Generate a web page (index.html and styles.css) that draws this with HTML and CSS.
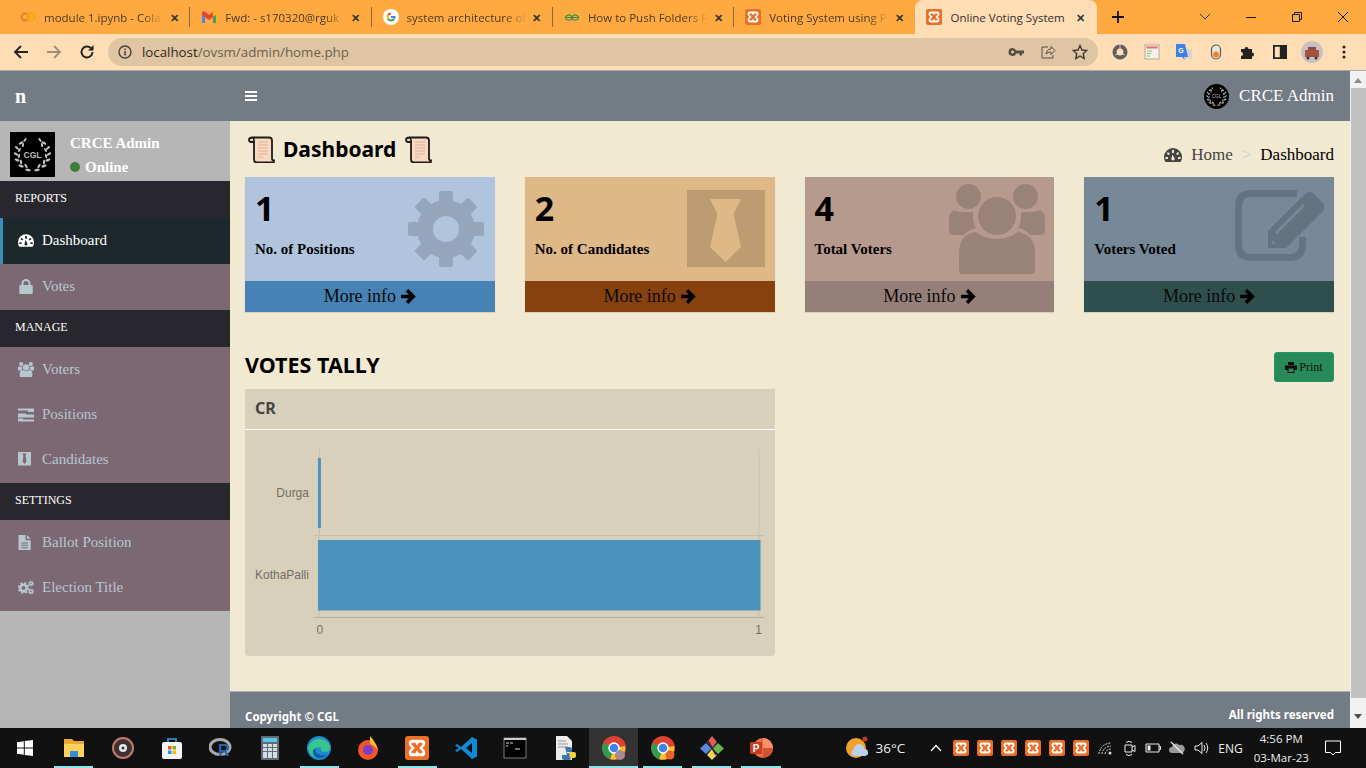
FILE: index.html
```html
<!DOCTYPE html>
<html lang="en">
<head>
	<meta charset="UTF-8">
	<title>Online Voting System</title>
	<link rel="stylesheet" href="styles.css">
</head>
<body>
	<svg class="defs" width="0" height="0">
		<symbol id="xampp" viewBox="0 0 16 16">
			<rect width="16" height="16" rx="2" fill="#ea7027"/>
			<path d="M5 2.500h6q2.500 0 2.500 2.400 0 2-2 3.100 2 1.100 2 3.100 0 2.400-2.500 2.400H5q-2.500 0-2.500-2.400 0-2 2-3.100-2-1.100-2-3.100Q2.500 2.500 5 2.500Z" fill="#fff"/>
			<path d="M5 4.500h1.800L8 6.300 9.200 4.500H11q.8.200.8 1L9.500 8l2.300 2.500q0 .8-.8 1H9.200L8 9.700 6.800 11.500H5q-.8-.2-.8-1L6.500 8 4.200 5.500q0-.8.800-1Z" fill="#ea7027"/>
		</symbol>
		<symbol id="gauge" viewBox="0 0 18 14">
			<path fill-rule="evenodd" d="M9 0a9 9 0 0 1 9 9q0 3-1.500 5h-15Q0 12 0 9a9 9 0 0 1 9-9ZM8 2v3h2V2ZM3.500 4 3 6l2 1 1-1.500ZM14.500 4 12 5.500l1 1.500 2-1ZM8.300 6.500 7.500 10a1.700 1.700 0 1 0 3 0ZM1.500 9v2h2.500V9ZM14 9v2h2.500V9Z"/>
		</symbol>
		<symbol id="lock" viewBox="0 0 16 15">
			<path fill-rule="evenodd" d="M3.500 6V4.500a4.500 4.500 0 0 1 9 0V6h1.500a.7.700 0 0 1 .7.700v7.600a.7.700 0 0 1-.7.700H2a.7.700 0 0 1-.7-.7V6.700A.7.700 0 0 1 2 6ZM5.500 6h5V4.500a2.500 2.500 0 0 0-5 0Z"/>
		</symbol>
		<symbol id="users" viewBox="0 0 96 90">
			<circle cx="19.500" cy="12.500" r="12.500"/>
			<circle cx="76.500" cy="12.500" r="12.500"/>
			<circle cx="48" cy="32" r="19"/>
			<path d="M13 90q-3 0-3-6V70q0-20 17-22 9 7 21 7t21-7q17 2 17 22v14q0 6-3 6Z"/>
			<path d="M5 26q6 3 19 2 0 12 3 16-7 1-12 7H5q-5 0-5-5V36q0-8 5-10Z"/>
			<path d="M91 26q-6 3-19 2 0 12-3 16 7 1 12 7h10q5 0 5-5V36q0-8-5-10Z"/>
		</symbol>
		<symbol id="tasks" viewBox="0 0 16 14">
			<path d="M0 1h16v3.500H10V3H0ZM0 6h8v1h8v3H0ZM0 11h5v1h11v2H0Z"/>
		</symbol>
		<symbol id="tie" viewBox="0 0 16 15">
			<path fill-rule="evenodd" d="M0 0h13v13.500H0ZM4.500 1.500h4L7.500 4l1 5.500-2 2.500-2-2.500 1-5.500Z"/>
		</symbol>
		<symbol id="file" viewBox="0 0 16 16">
			<path fill-rule="evenodd" d="M0 0h7.500v5.500H13V16H0ZM3 8v1h7V8ZM3 10.500v1h7v-1ZM3 13v1h7v-1ZM9 0l4 4H9Z"/>
		</symbol>
		<symbol id="cogs" viewBox="0 0 16 14">
			<g fill="none" stroke="currentColor">
				<circle cx="5.500" cy="7.500" r="3.200" stroke-width="2.600"/>
				<circle cx="5.500" cy="7.500" r="5" stroke-width="1.600" stroke-dasharray="2.200 1.730"/>
				<circle cx="13" cy="3" r="1.500" stroke-width="1.400"/>
				<circle cx="13" cy="3" r="2.600" stroke-width="1" stroke-dasharray="1.100 1.050"/>
				<circle cx="13" cy="11" r="1.500" stroke-width="1.400"/>
				<circle cx="13" cy="11" r="2.600" stroke-width="1" stroke-dasharray="1.100 1.050"/>
			</g>
		</symbol>
		<symbol id="scroll" viewBox="0 0 27 27">
			<path d="M5 1.500h16q3 0 3 3v18q0 2 2 2v1q0 1-1 1H9q-3 0-3-3V6H3Q1 6 1 3.800T5 1.500Z" fill="#f9d8c2" stroke="#1f1a18" stroke-width="1.800"/>
			<path d="M10 6h10M10 9h10M10 12h10M10 15h10M10 18h10M10 21h5" stroke="#dcb49c" fill="none"/>
			<path d="M6 6V4.500q0-3-2-3" fill="none" stroke="#1f1a18" stroke-width="1.600"/>
		</symbol>
		<symbol id="arrow" viewBox="0 0 16 16">
			<path d="M1 8h12.500M7 1.800l6.200 6.200L7 14.200" fill="none" stroke="#000" stroke-width="3.600"/>
		</symbol>
		<symbol id="logo" viewBox="0 0 45 45">
			<rect width="45" height="45" fill="#000"/>
			<g fill="#c4c4c4">
				<ellipse cx="15" cy="8" rx="1" ry="2.300" transform="rotate(35 15 8)"/>
				<ellipse cx="11" cy="11" rx="1.100" ry="2.500" transform="rotate(60 11 11)"/>
				<ellipse cx="13" cy="13" rx="1" ry="2.200" transform="rotate(10 13 13)"/>
				<ellipse cx="7" cy="16" rx="1.100" ry="2.500" transform="rotate(-50 7 16)"/>
				<ellipse cx="9.500" cy="18" rx="1" ry="2.200" transform="rotate(30 9.500 18)"/>
				<ellipse cx="6" cy="22" rx="1.100" ry="2.500" transform="rotate(-60 6 22)"/>
				<ellipse cx="9" cy="24" rx="1" ry="2.200" transform="rotate(15 9 24)"/>
				<ellipse cx="7" cy="28" rx="1.200" ry="2.600" transform="rotate(-70 7 28)"/>
				<ellipse cx="11" cy="30" rx="1.100" ry="2.400" transform="rotate(-10 11 30)"/>
				<ellipse cx="11" cy="34" rx="1.200" ry="2.800" transform="rotate(-70 11 34)"/>
				<ellipse cx="16" cy="34" rx="1.100" ry="2.500" transform="rotate(-30 16 34)"/>
				<ellipse cx="18" cy="38" rx="1.200" ry="2.800" transform="rotate(-80 18 38)"/>
				<ellipse cx="30" cy="8" rx="1" ry="2.300" transform="rotate(-35 30 8)"/>
				<ellipse cx="34" cy="11" rx="1.100" ry="2.500" transform="rotate(-60 34 11)"/>
				<ellipse cx="32" cy="13" rx="1" ry="2.200" transform="rotate(-10 32 13)"/>
				<ellipse cx="38" cy="16" rx="1.100" ry="2.500" transform="rotate(50 38 16)"/>
				<ellipse cx="35.500" cy="18" rx="1" ry="2.200" transform="rotate(-30 35.500 18)"/>
				<ellipse cx="39" cy="22" rx="1.100" ry="2.500" transform="rotate(60 39 22)"/>
				<ellipse cx="36" cy="24" rx="1" ry="2.200" transform="rotate(-15 36 24)"/>
				<ellipse cx="38" cy="28" rx="1.200" ry="2.600" transform="rotate(70 38 28)"/>
				<ellipse cx="34" cy="30" rx="1.100" ry="2.400" transform="rotate(10 34 30)"/>
				<ellipse cx="34" cy="34" rx="1.200" ry="2.800" transform="rotate(70 34 34)"/>
				<ellipse cx="29" cy="34" rx="1.100" ry="2.500" transform="rotate(30 29 34)"/>
				<ellipse cx="27" cy="38" rx="1.200" ry="2.800" transform="rotate(80 27 38)"/>
			</g>
			<text x="22.500" y="25.500" class="logo-text">CGL</text>
		</symbol>
	</svg>

	<div class="tabstrip">
		<div class="tab">
			<svg class="favicon" viewBox="0 0 16 16"><circle cx="5" cy="8" r="3.500" fill="none" stroke="#e8862a" stroke-width="2.500"/><circle cx="11" cy="8" r="3.500" fill="none" stroke="#f4a90f" stroke-width="2.500"/></svg>
			<span class="tab-title">module 1.ipynb - Cola</span><span class="tab-close">✕</span>
		</div>
		<div class="tab">
			<svg class="favicon" viewBox="0 0 16 16"><path d="M1 4v10h3V7Z" fill="#4a86e8"/><path d="M15 4v10h-3V7Z" fill="#34a853"/><path d="M1 3l2-1 5 4 5-4 2 1v3l-7 5-7-5Z" fill="#ea4335"/><path d="M13 2l2 1v3l-3 2V3Z" fill="#fbbc04"/></svg>
			<span class="tab-title">Fwd: - s170320@rguk</span><span class="tab-close">✕</span>
		</div>
		<div class="tab">
			<svg class="favicon" viewBox="0 0 16 16"><circle cx="8" cy="8" r="8" fill="#fff"/><path d="M8 4.500a3.500 3.500 0 0 0-3 1.800" fill="none" stroke="#ea4335" stroke-width="2"/><path d="M5 6.300a3.500 3.500 0 0 0 0 3.400" fill="none" stroke="#fbbc04" stroke-width="2"/><path d="M5 9.700a3.500 3.500 0 0 0 6 0" fill="none" stroke="#34a853" stroke-width="2"/><path d="M11 9.700Q11.500 9 11.500 8H8" fill="none" stroke="#4285f4" stroke-width="2"/></svg>
			<span class="tab-title">system architecture of</span><span class="tab-close">✕</span>
		</div>
		<div class="tab">
			<svg class="favicon" viewBox="0 0 16 16"><path d="M1 8.500h14M8 8.500Q7 5.500 4.500 6T1.500 8.500t3 2.500T8 8.500Q9 5.500 11.500 6t3 2.500-3 2.500T8 8.500" fill="none" stroke="#2f8d46" stroke-width="1.100"/></svg>
			<span class="tab-title">How to Push Folders F</span><span class="tab-close">✕</span>
		</div>
		<div class="tab tab-last">
			<svg class="favicon"><use href="#xampp"/></svg>
			<span class="tab-title">Voting System using P</span><span class="tab-close">✕</span>
		</div>
		<div class="tab tab-active">
			<svg class="favicon"><use href="#xampp"/></svg>
			<span class="tab-title">Online Voting System</span><span class="tab-close">✕</span>
		</div>
		<svg class="new-tab" viewBox="0 0 14 14"><path d="M7 1v12M1 7h12" stroke="#111" stroke-width="1.800"/></svg>
		<div class="window-controls">
			<svg viewBox="0 0 12 12"><path d="M1 3l5 5 5-5" fill="none" stroke="#3a3a3a"/></svg>
			<svg viewBox="0 0 12 12"><path d="M1 6.500h10" stroke="#1a1a1a"/></svg>
			<svg viewBox="0 0 12 12"><path d="M1.500 3.500h7v7h-7ZM3.500 3.500v-2h7v7h-2" fill="none" stroke="#1a1a1a"/></svg>
			<svg viewBox="0 0 12 12"><path d="M1 1l10 10M11 1L1 11" stroke="#1a1a1a"/></svg>
		</div>
	</div>

	<div class="toolbar">
		<svg class="tool-btn" viewBox="0 0 16 16"><path d="M15 8H2M8 2L2 8l6 6" fill="none" stroke="#222" stroke-width="1.800"/></svg>
		<svg class="tool-btn" viewBox="0 0 16 16"><path d="M1 8h13M8 2l6 6-6 6" fill="none" stroke="#a08f7c" stroke-width="1.800"/></svg>
		<svg class="tool-btn" viewBox="0 0 16 16"><path d="M13.500 8a5.500 5.500 0 1 1-1.600-3.900" fill="none" stroke="#222" stroke-width="1.900"/><path d="M14.500 1v5.500H9Z" fill="#222"/></svg>
		<div class="omnibox">
			<svg class="omni-info" viewBox="0 0 14 14"><circle cx="7" cy="7" r="6" fill="none" stroke="#4a4238" stroke-width="1.400"/><path d="M7 6v4.500M7 3.500v1.500" stroke="#4a4238" stroke-width="1.500"/></svg>
			<span class="url"><span class="url-host">localhost</span>/ovsm/admin/home.php</span>
			<svg class="omni-icon" viewBox="0 0 16 16"><path fill-rule="evenodd" d="M4.500 4a4 4 0 0 1 3.700 2.500H16v3h-2v2h-2.500v-2H8.200A4 4 0 1 1 4.500 4Zm0 2.500a1.500 1.500 0 1 0 .1 0Z" fill="#574f45"/></svg>
			<svg class="omni-icon" viewBox="0 0 16 16"><path d="M8 3H2v11h11v-3M6 10q1-5 5-5V2.500l4 4-4 4V8q-3 0-5 2Z" fill="none" stroke="#574f45"/></svg>
			<svg class="omni-icon" viewBox="0 0 16 16"><path d="M8 1.500l2 4.500 4.800.5-3.600 3.200 1 4.800L8 12l-4.200 2.500 1-4.800L1.200 6.500 6 6Z" fill="none" stroke="#3f3a33" stroke-width="1.400"/></svg>
		</div>
		<div class="extensions">
			<svg viewBox="0 0 16 16"><circle cx="8" cy="8" r="5.500" fill="none" stroke="#5e5e5e" stroke-width="4"/><path d="M8 0v5M13 11l-4-2M3 11l4-2" stroke="#ffddb5" stroke-width=".8"/></svg>
			<svg viewBox="0 0 16 16"><rect x="1" y="1" width="14" height="14" fill="#f6f1ea" stroke="#b0aaa0"/><path d="M2.500 2.500h11v2h-11Z" fill="#e86a5c"/><path d="M3 7h5M3 9.500h4M3 12h3" stroke="#7cc36a"/></svg>
			<svg viewBox="0 0 16 16"><path d="M8 5h8v10H9Z" fill="#d9d4cc"/><path d="M0 0h9l3 13H8l1 3-3-3H0Z" fill="#3f7fe8"/><text x="5" y="9" class="ext-g">G</text></svg>
			<svg viewBox="0 0 16 16"><rect x="3.500" y="1" width="9" height="14" rx="4.500" fill="#ece6de" stroke="#5b5b5b" stroke-width="1.200"/><circle cx="8" cy="10.500" r="3" fill="#f08026"/></svg>
			<svg viewBox="0 0 16 16"><path d="M1 5h3.500a2 2 0 1 1 4 0H12v3.500a2 2 0 1 1 0 4V15H1v-3a2 2 0 1 0 0-4Z" fill="#222"/></svg>
			<svg viewBox="0 0 16 16"><path fill-rule="evenodd" d="M1 1h14v14H1ZM2.800 2.800v10.400h5V2.800Z" fill="#222"/></svg>
			<svg class="avatar" viewBox="0 0 22 22"><circle cx="11" cy="11" r="11" fill="#c8c1c4"/><rect x="4" y="9" width="14" height="7" fill="#a8503c"/><path d="M7 6h8v3H7Z" fill="#8b4a3c"/><circle cx="7" cy="17" r="1.500" fill="#333"/><circle cx="15" cy="17" r="1.500" fill="#333"/></svg>
			<svg viewBox="0 0 16 16"><circle cx="8" cy="3" r="1.500" fill="#222"/><circle cx="8" cy="8" r="1.500" fill="#222"/><circle cx="8" cy="13" r="1.500" fill="#222"/></svg>
		</div>
	</div>

	<div class="viewport">
		<div class="page">
			<header class="topbar">
				<div class="brand">n</div>
				<svg class="burger" viewBox="0 0 12 10"><path d="M0 1h12M0 5h12M0 9h12" stroke="#fff" stroke-width="2"/></svg>
				<div class="top-user">
					<svg class="top-avatar"><use href="#logo"/></svg>
					<span>CRCE Admin</span>
				</div>
			</header>
			<div class="main">
				<aside class="sidebar">
					<div class="user-panel">
						<svg class="user-logo"><use href="#logo"/></svg>
						<div class="user-info">
							<div class="user-name">CRCE Admin</div>
							<div class="user-status"><span class="status-dot"></span>Online</div>
						</div>
					</div>
					<div class="menu-head">REPORTS</div>
					<a class="menu-item active"><svg class="menu-icon"><use href="#gauge"/></svg>Dashboard</a>
					<a class="menu-item"><svg class="menu-icon"><use href="#lock"/></svg>Votes</a>
					<div class="menu-head">MANAGE</div>
					<a class="menu-item"><svg class="menu-icon"><use href="#users"/></svg>Voters</a>
					<a class="menu-item"><svg class="menu-icon"><use href="#tasks"/></svg>Positions</a>
					<a class="menu-item"><svg class="menu-icon"><use href="#tie"/></svg>Candidates</a>
					<div class="menu-head">SETTINGS</div>
					<a class="menu-item"><svg class="menu-icon"><use href="#file"/></svg>Ballot Position</a>
					<a class="menu-item"><svg class="menu-icon"><use href="#cogs"/></svg>Election Title</a>
				</aside>
				<div class="content">
					<div class="content-inner">
						<div class="content-head">
							<h1><svg class="scroll"><use href="#scroll"/></svg>Dashboard<svg class="scroll"><use href="#scroll"/></svg></h1>
							<div class="crumbs">
								<svg class="crumb-icon"><use href="#gauge"/></svg>
								<span class="crumb-home">Home</span>
								<span class="crumb-sep">&gt;</span>
								<span>Dashboard</span>
							</div>
						</div>

						<div class="cards">
							<div class="card card-blue">
								<div class="card-body">
									<h3>1</h3>
									<p>No. of Positions</p>
									<svg class="card-icon icon-gear" viewBox="0 0 78 78">
										<g class="shade">
											<circle cx="39" cy="39" r="21" fill="none" stroke="#000" stroke-width="16"/>
											<path d="M32 3Q32 1 34 1H44Q46 1 46 3V15H32Z"/>
											<path d="M32 3Q32 1 34 1H44Q46 1 46 3V15H32Z" transform="rotate(45 39 39)"/>
											<path d="M32 3Q32 1 34 1H44Q46 1 46 3V15H32Z" transform="rotate(90 39 39)"/>
											<path d="M32 3Q32 1 34 1H44Q46 1 46 3V15H32Z" transform="rotate(135 39 39)"/>
											<path d="M32 3Q32 1 34 1H44Q46 1 46 3V15H32Z" transform="rotate(180 39 39)"/>
											<path d="M32 3Q32 1 34 1H44Q46 1 46 3V15H32Z" transform="rotate(225 39 39)"/>
											<path d="M32 3Q32 1 34 1H44Q46 1 46 3V15H32Z" transform="rotate(270 39 39)"/>
											<path d="M32 3Q32 1 34 1H44Q46 1 46 3V15H32Z" transform="rotate(315 39 39)"/>
										</g>
									</svg>
								</div>
								<a class="card-foot">More info <svg class="arrow"><use href="#arrow"/></svg></a>
							</div>
							<div class="card card-tan">
								<div class="card-body">
									<h3>2</h3>
									<p>No. of Candidates</p>
									<svg class="card-icon icon-tie" viewBox="0 0 78 77">
										<path class="shade" fill-rule="evenodd" d="M0 0H78V77H0ZM23 9H54L46.500 24 54 57 38.500 72 23 57 30.500 24Z"/>
									</svg>
								</div>
								<a class="card-foot">More info <svg class="arrow"><use href="#arrow"/></svg></a>
							</div>
							<div class="card card-rose">
								<div class="card-body">
									<h3>4</h3>
									<p>Total Voters</p>
									<svg class="card-icon icon-users shade"><use href="#users"/></svg>
								</div>
								<a class="card-foot">More info <svg class="arrow"><use href="#arrow"/></svg></a>
							</div>
							<div class="card card-slate">
								<div class="card-body">
									<h3>1</h3>
									<p>Voters Voted</p>
									<svg class="card-icon icon-edit" viewBox="0 0 91 71">
										<g class="shade">
											<path d="M62 3.500H16Q3.500 3.500 3.500 16V55Q3.500 67.500 16 67.500H55Q67.500 67.500 67.500 55V47" fill="none" stroke="#000" stroke-width="7"/>
											<path fill-rule="evenodd" d="M33 58V41L70 4Q75 0 79 4L88 13Q91 17 88 21L51 58ZM40 42L68 14 70 16 42 44ZM37 46V54H41L37 50Z"/>
										</g>
									</svg>
								</div>
								<a class="card-foot">More info <svg class="arrow"><use href="#arrow"/></svg></a>
							</div>
						</div>

						<div class="tally-head">
							<h2>VOTES TALLY</h2>
							<button class="print-btn"><svg viewBox="0 0 12 11"><path fill-rule="evenodd" d="M3 0h6v3H3ZM0 3.500h12V8h-2.500v3h-7V8H0ZM3.500 6.500V10h5V6.500Z" fill="#111"/></svg>Print</button>
						</div>

						<div class="tally-grid">
							<div class="box">
								<div class="box-head">CR</div>
								<svg class="chart" viewBox="0 0 530 226">
									<path class="grid" d="M74.500 19V187M514.500 19V187M69 105.500H520"/>
									<path class="axis" d="M69 187.500H520"/>
									<rect class="bar" x="73" y="28" width="3" height="70"/>
									<rect class="bar" x="73" y="110" width="443" height="70.500"/>
									<text class="chart-label" x="64" y="67">Durga</text>
									<text class="chart-label" x="64" y="149">KothaPalli</text>
									<text class="chart-tick" x="75" y="204">0</text>
									<text class="chart-tick" x="514" y="204">1</text>
								</svg>
							</div>
						</div>
					</div>
					<footer class="footer">
						<span class="foot-left">Copyright © CGL</span>
						<span class="foot-right">All rights reserved</span>
					</footer>
				</div>
			</div>
		</div>
		<div class="scrollbar">
			<span class="scroll-up"></span>
			<div class="scroll-thumb"></div>
			<span class="scroll-down"></span>
		</div>
	</div>

	<div class="taskbar">
		<div class="task win"><svg viewBox="0 0 16 16"><path d="M0 2.200 6.800 1.200V7.500H0ZM7.800 1 16 0V7.500H7.800ZM0 8.500H6.800V14.800L0 13.800ZM7.800 8.500H16V16L7.800 15Z" fill="#fff"/></svg></div>
		<div class="task on"><svg viewBox="0 0 24 24"><path d="M2 3h8l2 2h10v4H2Z" fill="#e8a92c"/><path d="M2 8h20v13H2Z" fill="#ffd25e"/><path d="M8 15h8v6H8Z" fill="#2f8fd8"/></svg></div>
		<div class="task"><svg viewBox="0 0 24 24"><circle cx="12" cy="12" r="10" fill="#3b3231" stroke="#c5786c" stroke-width="2"/><circle cx="12" cy="12" r="4" fill="#e8e8e8"/><circle cx="12" cy="12" r="1.500" fill="#333"/></svg></div>
		<div class="task"><svg viewBox="0 0 24 24"><path d="M8 6V3h8v3" fill="none" stroke="#2aa5d8" stroke-width="1.600"/><rect x="2" y="6" width="20" height="17" rx="2" fill="#f4f4f4"/><path d="M8 10h3.500v3.500H8Z" fill="#f25022"/><path d="M12.500 10H16v3.500h-3.500Z" fill="#7fba00"/><path d="M8 14.500h3.500V18H8Z" fill="#00a4ef"/><path d="M12.500 14.500H16V18h-3.500Z" fill="#ffb900"/></svg></div>
		<div class="task"><svg viewBox="0 0 24 24"><ellipse cx="11" cy="11" rx="10" ry="7.500" fill="none" stroke="#a8a8ad" stroke-width="3"/><text x="9" y="20" class="task-r">R</text></svg></div>
		<div class="task"><svg viewBox="0 0 24 24"><rect x="3" y="0" width="18" height="24" rx="1" fill="#5f6b76"/><rect x="5" y="2" width="14" height="4" fill="#58c8e8"/><path d="M5 8h4v3H5ZM10 8h4v3h-4ZM15 8h4v3h-4ZM5 12h4v3H5ZM10 12h4v3h-4ZM15 12h4v3h-4ZM5 16h4v6H5ZM10 16h4v6h-4ZM15 16h4v6h-4Z" fill="#d5dde2"/></svg></div>
		<div class="task on"><svg viewBox="0 0 24 24"><circle cx="12" cy="12" r="12" fill="#1b8ccf"/><path d="M1 12A11.500 11.500 0 0 1 23 10q1 6-5 6-5 0-4-4-3-2-6 1-2 5 2 9Q2 20 1 12Z" fill="#37c48e"/><path d="M6 14q-1 7 6 8 5 0 8-3-6 1-9-1-3-1-2-6Z" fill="#0f5ea8"/></svg></div>
		<div class="task"><svg viewBox="0 0 24 24"><circle cx="12" cy="14" r="10" fill="#f0562a"/><path d="M14 0q5 5 8 14-4-5-8-6Z" fill="#ffbc2c"/><circle cx="12" cy="14" r="5" fill="#7a3dc8"/></svg></div>
		<div class="task on"><svg viewBox="0 0 24 24"><use href="#xampp"/></svg></div>
		<div class="task"><svg viewBox="0 0 24 24"><path d="M18 1l5 2.500v17L18 23 7 13l-4 3-2-1.500L5 12 1 9.500 3 8l4 3Zm0 6-6 5 6 5Z" fill="#0e8ad6"/></svg></div>
		<div class="task"><svg viewBox="0 0 24 24"><rect x="1" y="2" width="22" height="20" fill="#000" stroke="#7a7a7a"/><path d="M1 2h22v2H1Z" fill="#ccc"/><path d="M3 7h3M7 7h3M3 10h2M12 13h5" stroke="#ddd"/></svg></div>
		<div class="task"><svg viewBox="0 0 24 24"><path d="M3 0h11l5 5v19H3Z" fill="#ececec"/><path d="M5 5h8M5 8h10M5 11h10" stroke="#999"/><path d="M12 11h5q2 0 2 2v3h-5v1h4v5q0 2-3 2h-4q-2 0-2-2v-3h5" fill="#3d79ab"/><path d="M16 16h5q2 0 2 2v2q0 2-2 2h-4z" fill="#f4cf45"/></svg></div>
		<div class="task on current"><svg viewBox="0 0 24 24"><circle cx="12" cy="12" r="12" fill="#e0402f"/><path d="M12 12 23 10A11.500 11.500 0 0 1 8 23Z" fill="#f7c42f"/><path d="M12 12 8 23A11.500 11.500 0 0 1 1.500 7Z" fill="#2f9d50"/><circle cx="12" cy="12" r="5" fill="#3f84e8" stroke="#fff" stroke-width="1.500"/><circle cx="18" cy="19" r="5" fill="#aa8a90"/></svg></div>
		<div class="task on"><svg viewBox="0 0 24 24"><circle cx="12" cy="12" r="12" fill="#e0402f"/><path d="M12 12 23 10A11.500 11.500 0 0 1 8 23Z" fill="#f7c42f"/><path d="M12 12 8 23A11.500 11.500 0 0 1 1.500 7Z" fill="#2f9d50"/><circle cx="12" cy="12" r="5" fill="#3f84e8" stroke="#fff" stroke-width="1.500"/><circle cx="19" cy="19" r="4.500" fill="#e8622a"/></svg></div>
		<div class="task on"><svg viewBox="0 0 24 24"><path d="M12 0l5 6-5 6-5-6Z" fill="#e05a5a"/><path d="M6 7l5.500 5.500L6 18 0 12.500Z" fill="#5a8ae0"/><path d="M18 7l6 5.500-6 5.500-5.500-5.500Z" fill="#66b84a"/><path d="M12 13l5 6-5 5-5-5Z" fill="#f0d060"/><path d="M8 5l8 14" stroke="#222" stroke-width="1.500"/></svg></div>
		<div class="task on"><svg viewBox="0 0 24 24"><circle cx="14" cy="12" r="10" fill="#ed6c47"/><path d="M14 2a10 10 0 0 1 10 10H14Z" fill="#ff8f6b"/><path d="M14 12h10a10 10 0 0 1-10 10Z" fill="#d35230"/><rect x="1" y="6" width="12" height="12" rx="1" fill="#c43e1c"/><text x="7" y="16" class="task-p">P</text></svg></div>

		<div class="tray">
			<div class="weather">
				<svg viewBox="0 0 24 24"><circle cx="10" cy="12" r="10" fill="#f2a22c"/><circle cx="19" cy="3" r="2.500" fill="#c0392b"/><path d="M7 20a4 4 0 0 1 1-7 5 5 0 0 1 10 0 3.500 3.500 0 0 1 1 7Z" fill="#b9d3ea"/></svg>
				<span>36°C</span>
			</div>
			<svg class="tray-up" viewBox="0 0 12 8"><path d="M1 7l5-5.500L11 7" fill="none" stroke="#fff" stroke-width="1.300"/></svg>
			<div class="tray-apps">
				<svg><use href="#xampp"/></svg><svg><use href="#xampp"/></svg><svg><use href="#xampp"/></svg><svg><use href="#xampp"/></svg><svg><use href="#xampp"/></svg><svg><use href="#xampp"/></svg>
			</div>
			<div class="tray-icons">
				<svg viewBox="0 0 16 16"><path d="M2 14A12 12 0 0 1 14 3M5 14a9 9 0 0 1 9-8M8 14a6 6 0 0 1 6-5" fill="none" stroke="#ddd" stroke-dasharray="2 1"/><circle cx="13" cy="13" r="1.500" fill="#ddd"/></svg>
				<svg viewBox="0 0 16 16"><path d="M4 5h7v7H4ZM11 7l3-1.500v6L11 10M5 2.500Q8 0 11 2.500M5 14.500Q8 16.500 11 14.500" fill="none" stroke="#eee"/></svg>
				<svg viewBox="0 0 16 16"><path d="M1 4h13v8H1ZM14 6.500h1.500v3H14" fill="none" stroke="#eee"/><rect x="2.500" y="5.500" width="3" height="5" fill="#eee"/></svg>
				<svg viewBox="0 0 16 16"><path d="M3 13a3 3 0 0 1 0-6 4 4 0 0 1 7-2 3.500 3.500 0 0 1 3 8Z" fill="#9a9a9a"/><path d="M2 2l12 12" stroke="#eee" stroke-width="1.200"/></svg>
				<svg viewBox="0 0 16 16"><path d="M2 6h3l4-3.500v11L5 10H2ZM11 5q2 3 0 6M13 3q3.500 5 0 10" fill="none" stroke="#eee"/></svg>
			</div>
			<span class="lang">ENG</span>
			<div class="clock"><div>4:56 PM</div><div>03-Mar-23</div></div>
			<svg class="notify" viewBox="0 0 16 16"><path d="M.5 1h15v11.500h-5L8 15l-2.500-2.500h-5Z" fill="none" stroke="#fff"/></svg>
		</div>
	</div>
</body>
</html>
```

FILE: styles.css
```css
html, body {
	margin: 0;
	height: 100%;
}
body {
	width: 1366px;
	height: 768px;
	overflow: hidden;
	display: flex;
	flex-direction: column;
	font-family: "Liberation Serif", serif;
	background-color: #111;
}
h1, h2, h3, p {
	margin: 0;
}
a {
	color: inherit;
}
.defs {
	position: absolute;
}

/* browser tabs */
.tabstrip {
	height: 34px;
	background-color: #ffaa40;
	display: flex;
	padding-left: 9px;
	font-family: "Open Sans", sans-serif;
	font-size: 11.5px;
	color: #4a3a26;
}
.tab {
	width: 181.3px;
	box-sizing: border-box;
	display: flex;
	align-items: center;
	padding: 0 8px 0 11px;
	position: relative;
}
.tab::after {
	content: "";
	position: absolute;
	right: 0;
	top: 7px;
	height: 20px;
	width: 1px;
	background-color: #8a6a3a;
}
.tab-last::after,
.tab-active::after {
	display: none;
}
.tab-active {
	background-color: #ffddb5;
	border-radius: 8px 8px 0 0;
	color: #33302c;
}
.favicon {
	width: 16px;
	height: 16px;
	flex: none;
	margin-right: 8px;
}
.tab-title {
	flex: 1;
	min-width: 0;
	white-space: nowrap;
	-webkit-mask-image: linear-gradient(to right, #000 82%, transparent);
	mask-image: linear-gradient(to right, #000 82%, transparent);
}
.tab-active .tab-title {
	-webkit-mask-image: none;
	mask-image: none;
}
.tab-close {
	width: 16px;
	margin-left: 2px;
	text-align: center;
	font-size: 11px;
	font-weight: 700;
	color: #333;
}
.new-tab {
	width: 14px;
	height: 14px;
	margin: 10px 0 0 14px;
}
.window-controls {
	margin-left: auto;
	display: flex;
	gap: 34px;
	padding: 11px 17px 0 0;
}
.window-controls svg {
	width: 12px;
	height: 12px;
}

/* address bar */
.toolbar {
	height: 36px;
	background-color: #ffddb5;
	display: flex;
	align-items: center;
	padding-left: 13px;
	box-sizing: border-box;
}
.tool-btn {
	width: 16px;
	height: 16px;
	margin-right: 17px;
}
.omnibox {
	width: 990px;
	margin-left: -4px;
	height: 28px;
	border-radius: 14px;
	background-color: #dfc5a3;
	display: flex;
	align-items: center;
	padding: 0 10px 0 10px;
	box-sizing: border-box;
	font-family: "Open Sans", sans-serif;
	font-size: 13.3px;
}
.omni-info {
	width: 14px;
	height: 14px;
	margin-right: 10px;
}
.url {
	flex: 1;
	color: #6a5f50;
}
.url-host {
	color: #2c2720;
}
.omni-icon {
	width: 16px;
	height: 16px;
	margin-left: 16px;
}
.extensions {
	display: flex;
	align-items: center;
	gap: 16px;
	margin-left: 14px;
}
.extensions svg {
	width: 16px;
	height: 16px;
}
.extensions .avatar {
	width: 22px;
	height: 22px;
	margin: 0 -3px;
}
.ext-g {
	font-family: "Liberation Sans", sans-serif;
	font-size: 7px;
	font-weight: 700;
	fill: #fff;
	text-anchor: middle;
}

/* page */
.viewport {
	height: 658px;
	display: flex;
	border-top: 1px solid #a9a9a9;
	box-sizing: border-box;
}
.page {
	width: 1350px;
	display: flex;
	flex-direction: column;
	background-color: #b6b6b6;
}
.topbar {
	height: 50px;
	flex: none;
	background-color: #737b85;
	display: flex;
	align-items: center;
	color: #fff;
}
.brand {
	width: 230px;
	padding-left: 15px;
	box-sizing: border-box;
	font-size: 20px;
	font-weight: 700;
}
.burger {
	width: 12px;
	height: 10px;
	margin-left: 15px;
}
.top-user {
	margin-left: auto;
	padding-right: 16px;
	display: flex;
	align-items: center;
	font-size: 17px;
}
.top-avatar {
	width: 25px;
	height: 25px;
	border-radius: 50%;
	margin-right: 10px;
}
.main {
	flex: 1;
	min-height: 0;
	display: flex;
}

/* sidebar */
.sidebar {
	width: 230px;
	flex: none;
	font-size: 15px;
}
.user-panel {
	height: 60px;
	display: flex;
	padding: 11px 0 0 10px;
	box-sizing: border-box;
	color: #fff;
	font-weight: 700;
}
.user-logo {
	width: 45px;
	height: 45px;
	flex: none;
}
.user-info {
	margin-left: 15px;
}
.user-name {
	line-height: 22px;
}
.user-status {
	line-height: 26px;
	display: flex;
	align-items: center;
}
.status-dot {
	width: 10px;
	height: 10px;
	border-radius: 50%;
	background-color: #3c7d3c;
	margin-right: 5px;
}
.menu-head {
	height: 37.4px;
	line-height: 35.5px;
	padding-left: 15px;
	box-sizing: border-box;
	background-color: #29272e;
	color: #fff;
	font-size: 12px;
}
.menu-item {
	height: 45.3px;
	display: flex;
	align-items: center;
	padding: 0 0 1px 18px;
	box-sizing: border-box;
	background-color: #7b6872;
	color: #b8c7ce;
}
.menu-item.active {
	height: 46px;
	background-color: #1e282c;
	color: #fff;
	border-left: 3px solid #3c8dbc;
	padding-left: 15px;
}
.menu-icon {
	width: 16px;
	height: 15px;
	margin-right: 8px;
	fill: currentColor;
}

/* content */
.content {
	flex: 1;
	min-width: 0;
	display: flex;
	flex-direction: column;
	background-color: #f2e9d2;
}
.content-inner {
	flex: 1;
	padding: 0 16px 0 15px;
}
.content-head {
	height: 56px;
	display: flex;
	justify-content: space-between;
}
.content-head h1 {
	display: flex;
	align-items: center;
	height: 56px;
	font-family: "Noto Sans", sans-serif;
	font-size: 21px;
	font-weight: 700;
	color: #000;
}
.scroll {
	width: 27px;
	height: 27px;
	margin: 0 8px 0 3px;
}
h1 .scroll + .scroll {
	margin-left: 9px;
}
.crumbs {
	display: flex;
	align-items: center;
	font-size: 17px;
	color: #000;
	padding-top: 11px;
}
.crumb-icon {
	width: 18px;
	height: 14px;
	fill: #444;
	margin-right: 9px;
}
.crumb-home {
	color: #444;
}
.crumb-sep {
	color: #ccc;
	margin: 0 9px;
}

.cards {
	display: grid;
	grid-template-columns: repeat(4, 1fr);
	gap: 30px;
}
.card {
	box-shadow: 0 1px 1px rgba(0, 0, 0, 0.1);
}
.card-blue { background-color: #b0c4de; }
.card-tan { background-color: #deb887; }
.card-rose { background-color: #b59a8d; }
.card-slate { background-color: #778899; }
.card-blue .card-foot { background-color: #4682b4; }
.card-tan .card-foot { background-color: #87410f; }
.card-rose .card-foot { background-color: #957f78; }
.card-slate .card-foot { background-color: #2f4f4f; }
.card-body {
	height: 104px;
	padding: 9px 10px 10px;
	box-sizing: border-box;
	position: relative;
	color: #000;
}
.card-body h3 {
	font-family: "Noto Sans", sans-serif;
	font-size: 34px;
	line-height: 44px;
	font-weight: 700;
}
.card-body p {
	font-size: 15px;
	font-weight: 700;
	margin-top: 11px;
}
.card-foot {
	height: 31px;
	display: flex;
	align-items: center;
	justify-content: center;
	gap: 4px;
	font-size: 18px;
	color: #0a0a0a;
}
.arrow {
	width: 16px;
	height: 17px;
}
.card-icon {
	position: absolute;
}
.shade {
	opacity: 0.15;
}
.icon-gear {
	width: 78px;
	height: 78px;
	top: 13px;
	right: 10px;
}
.icon-tie {
	width: 78px;
	height: 77px;
	top: 13px;
	right: 10px;
}
.icon-users {
	width: 96px;
	height: 90px;
	top: 7px;
	right: 9px;
}
.icon-edit {
	width: 91px;
	height: 71px;
	top: 13px;
	right: 8px;
}

.tally-head {
	display: flex;
	justify-content: space-between;
	height: 30px;
	margin: 40px 0 7px;
}
.tally-head h2 {
	font-family: "Noto Sans", sans-serif;
	font-size: 21.5px;
	line-height: 26px;
	font-weight: 700;
	color: #000;
}
.print-btn {
	width: 60px;
	height: 30px;
	padding: 0;
	border: 1px solid #1e9a5e;
	border-radius: 3px;
	background-color: #288a58;
	font-family: "Liberation Serif", serif;
	font-size: 12px;
	color: #111;
	display: flex;
	align-items: center;
	justify-content: center;
	gap: 2px;
}
.print-btn svg {
	width: 12px;
	height: 11px;
}
.tally-grid {
	display: grid;
	grid-template-columns: repeat(2, 1fr);
	gap: 30px;
}
.box {
	background-color: #d8d0bb;
	border-radius: 0 0 3px 3px;
}
.box-head {
	height: 41px;
	box-sizing: border-box;
	border-bottom: 1px solid #fff;
	padding-left: 10px;
	line-height: 38px;
	font-family: "Noto Sans", sans-serif;
	font-size: 16px;
	font-weight: 700;
	color: #444;
}
.chart {
	display: block;
	width: 100%;
	height: 226px;
}
.grid {
	fill: none;
	stroke: #c8c0ab;
}
.axis {
	fill: none;
	stroke: #b9b19c;
}
.bar {
	fill: #4b92bd;
}
.chart-label,
.chart-tick {
	font-family: "Liberation Sans", sans-serif;
	font-size: 12px;
	fill: #726e66;
}
.chart-label {
	text-anchor: end;
}
.chart-tick {
	text-anchor: middle;
}
.logo-text {
	font-family: "Liberation Sans", sans-serif;
	font-size: 8.5px;
	fill: #bcbcbc;
	text-anchor: middle;
}

.footer {
	height: 37px;
	flex: none;
	box-sizing: border-box;
	background-color: #737b85;
	border-top: 1px solid #a9b0bb;
	padding: 0 16px 0 15px;
	display: flex;
	justify-content: space-between;
	font-family: "Noto Sans", sans-serif;
	font-size: 11.5px;
	font-weight: 700;
	color: #fff;
}
.foot-left {
	padding-top: 17px;
}
.foot-right {
	padding-top: 15px;
}

/* scrollbar */
.scrollbar {
	width: 16px;
	background-color: #f1f1f1;
	display: flex;
	flex-direction: column;
	align-items: center;
}
.scroll-up,
.scroll-down {
	width: 0;
	height: 0;
	border-left: 4px solid transparent;
	border-right: 4px solid transparent;
}
.scroll-up {
	border-bottom: 5px solid #8a8a8a;
	margin: 7px 0 5px;
}
.scroll-down {
	border-top: 5px solid #505050;
	margin-top: 16px;
}
.scroll-thumb {
	width: 15px;
	height: 610px;
	background-color: #c1c1c1;
}

/* windows taskbar */
.taskbar {
	height: 40px;
	background-color: #111;
	display: flex;
	color: #eee;
	font-family: "Open Sans", sans-serif;
}
.task {
	width: 49.1px;
	height: 40px;
	flex: none;
	display: flex;
	align-items: center;
	justify-content: center;
	box-sizing: border-box;
	position: relative;
}
.task svg {
	width: 24px;
	height: 24px;
}
.task.win svg {
	width: 16px;
	height: 16px;
}
.task.on::after {
	content: "";
	position: absolute;
	left: 5px;
	right: 5px;
	bottom: 0;
	height: 2px;
	background-color: #8fe3ea;
}
.task.current {
	background-color: #333;
}
.task.current::after {
	left: 0;
	right: 0;
}
.task-r {
	font-family: "Liberation Sans", sans-serif;
	font-size: 16px;
	font-weight: 700;
	fill: #2a65b0;
}
.task-p {
	font-family: "Liberation Sans", sans-serif;
	font-size: 10px;
	font-weight: 700;
	fill: #fff;
	text-anchor: middle;
}
.tray {
	flex: 1;
	display: flex;
	align-items: center;
	padding-left: 60px;
}
.weather {
	display: flex;
	align-items: center;
	gap: 6px;
	font-size: 13.5px;
}
.weather svg {
	width: 24px;
	height: 24px;
}
.tray-up {
	width: 12px;
	height: 8px;
	margin: 0 11px 0 25px;
}
.tray-apps {
	display: flex;
	gap: 8px;
}
.tray-apps svg {
	width: 16px;
	height: 16px;
}
.tray-icons {
	display: flex;
	gap: 8px;
	margin-left: 8px;
}
.tray-icons svg {
	width: 16px;
	height: 16px;
}
.lang {
	font-size: 12px;
	margin-left: 9px;
	width: 24px;
}
.clock {
	width: 64px;
	margin-left: 7px;
	text-align: center;
	font-size: 11.5px;
	line-height: 19px;
}
.notify {
	width: 16px;
	height: 16px;
	margin-left: 12px;
}
```
